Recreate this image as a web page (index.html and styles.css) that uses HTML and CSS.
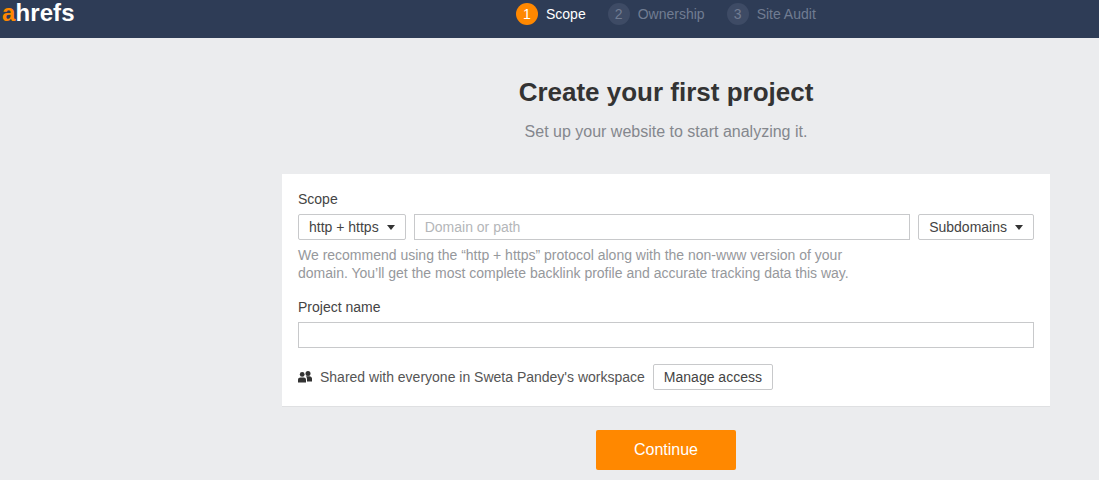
FILE: index.html
```html
<!DOCTYPE html>
<html lang="en">
<head>
    <meta charset="UTF-8">
    <title>Create your first project</title>
    <link rel="stylesheet" href="styles.css">
</head>
<body>
    <header class="topbar">
        <div class="logo"><span class="logo-a">a</span>hrefs</div>
        <ol class="steps">
            <li class="step active"><span class="step-num">1</span>Scope</li>
            <li class="step"><span class="step-num">2</span>Ownership</li>
            <li class="step"><span class="step-num">3</span>Site Audit</li>
        </ol>
    </header>

    <main class="content">
        <h1>Create your first project</h1>
        <p class="subtitle">Set up your website to start analyzing it.</p>

        <section class="card">
            <label class="field-label">Scope</label>
            <div class="scope-row">
                <button class="dropdown">http + https<span class="caret"></span></button>
                <input class="text-input" type="text" placeholder="Domain or path">
                <button class="dropdown">Subdomains<span class="caret"></span></button>
            </div>
            <p class="hint">We recommend using the “http + https” protocol along with the non-www version of your<br>domain. You’ll get the most complete backlink profile and accurate tracking data this way.</p>

            <label class="field-label name-label">Project name</label>
            <input class="text-input name-input" type="text">

            <div class="share-row">
                <svg class="share-icon" width="14" height="12" viewBox="0 0 14 12" fill="#333">
                    <circle cx="4.2" cy="3.4" r="2.4"/>
                    <circle cx="10" cy="2.6" r="2.5"/>
                    <path d="M0 11.5V8.6C0 7.2 1.2 6.4 2.4 6.4h3.4C7.2 6.4 8 7.4 8 8.6v2.9z"/>
                    <path d="M9 10.5V8c0-1-.4-1.7-1-2.4.4-.3 1-.4 1.6-.4h1.8C12.9 5.2 14 6.2 14 7.6v2.9z"/>
                </svg>
                <span class="share-text">Shared with everyone in Sweta Pandey's workspace</span>
                <button class="btn-outline">Manage access</button>
            </div>
        </section>

        <button class="btn-continue">Continue</button>
    </main>
</body>
</html>
```

FILE: styles.css
```css
* {
    box-sizing: border-box;
    margin: 0;
    padding: 0;
    font-family: 'Liberation Sans', Arial, sans-serif;
}

body {
    background: #ebecee;
    color: #444;
    font-size: 14px;
    height: 480px;
    overflow: hidden;
}

.topbar {
    background: #2e3c56;
    height: 38px;
    display: flex;
    align-items: flex-start;
    padding-left: 2px;
}

.logo {
    color: #fff;
    font-size: 24px;
    font-weight: bold;
    line-height: 24px;
    letter-spacing: 0.1px;
    width: 514px;
    margin-top: 1px;
}

.logo-a {
    color: #ff8800;
}

.steps {
    display: flex;
    gap: 22px;
    list-style: none;
    padding-top: 3px;
}

.step {
    display: flex;
    align-items: center;
    gap: 8px;
    height: 22px;
    color: #717c92;
}

.step-num {
    width: 22px;
    height: 22px;
    border-radius: 50%;
    background: #3e4b65;
    text-align: center;
    line-height: 22px;
}

.step.active {
    color: #fff;
}

.step.active .step-num {
    background: #ff8800;
}

.content {
    width: 768px;
    margin-left: 282px;
    display: flex;
    flex-direction: column;
    align-items: center;
}

h1 {
    font-size: 26px;
    line-height: 30px;
    margin-top: 39px;
    color: #333;
}

.subtitle {
    font-size: 16px;
    line-height: 20px;
    margin-top: 15px;
    color: #84878d;
}

.card {
    width: 768px;
    height: 233px;
    margin-top: 32px;
    padding: 16px;
    background: #fff;
    border-bottom: 1px solid #dfe0e2;
}

.field-label {
    display: block;
    line-height: 18px;
}

.scope-row {
    display: flex;
    gap: 8px;
    margin-top: 6px;
}

.dropdown, .btn-outline {
    height: 26px;
    padding: 0 10px;
    background: #fff;
    border: 1px solid #c8c9cb;
    border-radius: 2px;
    font-size: 14px;
    color: #444;
    white-space: nowrap;
}

.dropdown {
    display: flex;
    align-items: center;
    flex: none;
}

.caret {
    margin-left: 8px;
    border-left: 4px solid transparent;
    border-right: 4px solid transparent;
    border-top: 5px solid #333;
}

.text-input {
    height: 26px;
    padding: 0 10px;
    border: 1px solid #c8c9cb;
    font-size: 14px;
    color: #444;
    flex: 1;
    min-width: 0;
}

.text-input::placeholder {
    color: #b4b6b9;
}

.hint {
    margin-top: 6px;
    line-height: 18px;
    color: #96989c;
}

.name-label {
    margin-top: 16px;
}

.name-input {
    display: block;
    width: 100%;
    margin-top: 6px;
}

.share-row {
    display: flex;
    align-items: center;
    margin-top: 16px;
}

.share-icon {
    flex: none;
}

.share-text {
    margin-left: 8px;
    margin-right: 8px;
    color: #555;
}

.btn-continue {
    width: 140px;
    height: 40px;
    margin-top: 23px;
    background: #ff8800;
    color: #fff;
    border: none;
    border-radius: 2px;
    font-size: 16px;
}
```
